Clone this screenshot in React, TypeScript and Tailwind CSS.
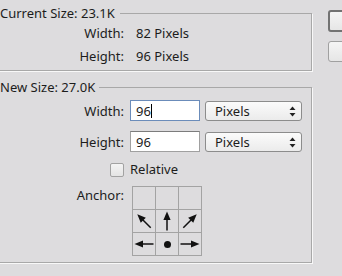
const arrowRot: Record<string, number> = { nw: -45, n: 0, ne: 45, w: -90, e: 90 }

function Arrow({ dir }: { dir: string }) {
  return (
    <svg width="22" height="22" viewBox="0 0 22 22">
      <g transform={`rotate(${arrowRot[dir]} 11 11)`}>
        <polygon points="11,1.5 7.4,10 14.6,10" fill="#111" />
        <line x1="11" y1="9.5" x2="11" y2="20.5" stroke="#111" strokeWidth="1.5" />
      </g>
    </svg>
  )
}

function AnchorGrid() {
  const cells = ["", "", "", "nw", "n", "ne", "w", "dot", "e"]
  return (
    <div className="grid grid-cols-[22px_22px_22px] gap-px p-px bg-[#a3a3a3] w-fit">
      {cells.map((c, i) => (
        <div key={i} className="h-[22px] w-[22px] bg-[#dddcde] flex items-center justify-center">
          {c === "dot" ? (
            <div className="h-[7px] w-[7px] rounded-full bg-[#111]" />
          ) : c ? (
            <Arrow dir={c} />
          ) : null}
        </div>
      ))}
    </div>
  )
}

function UnitSelect() {
  return (
    <div className="relative h-[20px] w-[97px] rounded-[3px] border border-[#8c8c8c] bg-gradient-to-b from-[#fbfbfb] to-[#ebebeb] pl-[9px] flex items-center">
      <span>Pixels</span>
      <svg className="absolute right-[5px] top-[4px]" width="7" height="11" viewBox="0 0 7 11">
        <polygon points="3.5,0.5 6.5,4 0.5,4" fill="#222" />
        <polygon points="3.5,10.5 6.5,7 0.5,7" fill="#222" />
      </svg>
    </div>
  )
}

export default function App() {
  return (
    <div className="w-[342px] h-[276px] overflow-hidden bg-[#dddcde] font-['Noto_Sans',sans-serif] text-[13px] leading-4 text-[#1c1c1c]">
      <div className="flex pt-[5px]">
        <div className="-ml-px w-[313px] shrink-0 flex flex-col gap-2">
          <fieldset className="border border-[#a8a8a8] shadow-[1px_1px_0_#f8f8f8] pt-1 pb-[6px]">
            <legend className="pr-[5px]">Current Size: 23.1K</legend>
            <div className="grid grid-cols-[124px_1fr] gap-x-3 gap-y-[7px]">
              <span className="text-right">Width:</span>
              <span>82 Pixels</span>
              <span className="text-right">Height:</span>
              <span>96 Pixels</span>
            </div>
          </fieldset>

          <fieldset className="border border-[#a8a8a8] shadow-[1px_1px_0_#f8f8f8] pt-[5px] pb-[6px]">
            <legend className="pr-1">New Size: 27.0K</legend>
            <div className="grid grid-cols-[124px_1fr] gap-x-[6px] gap-y-[10px] items-center">
              <span className="text-right">Width:</span>
              <div className="flex items-center gap-[5px]">
                <div className="h-[21px] w-[70px] border border-[#6b8cba] bg-white px-[5px] flex items-center">
                  <span>96</span>
                  <span className="h-[14px] w-px bg-black" />
                </div>
                <UnitSelect />
              </div>

              <span className="text-right">Height:</span>
              <div className="flex items-center gap-[5px]">
                <div className="h-[21px] w-[70px] border border-[#a0a0a0] border-t-[#7c7c7c] bg-white px-[5px] flex items-center">
                  <span>96</span>
                </div>
                <UnitSelect />
              </div>

              <div className="flex justify-end">
                <div className="h-[14px] w-[14px] rounded-[2px] border border-[#a2a2a2] bg-gradient-to-b from-[#f4f4f4] to-[#e4e4e4]" />
              </div>
              <span className="-mt-px">Relative</span>

              <span className="text-right self-start">Anchor:</span>
              <div className="pl-[2px] -mt-px">
                <AnchorGrid />
              </div>
            </div>
          </fieldset>
        </div>

        <div className="ml-[16px] shrink-0 flex flex-col gap-[9px] pt-[5px]">
          <div className="h-[22px] w-[80px] rounded-[3px] border-2 border-[#727272] bg-gradient-to-b from-[#f5f5f5] to-[#e6e6e6]" />
          <div className="h-[21px] w-[80px] rounded-[3px] border border-[#a0a0a0] bg-gradient-to-b from-[#f5f5f5] to-[#e6e6e6]" />
        </div>
      </div>
    </div>
  )
}
